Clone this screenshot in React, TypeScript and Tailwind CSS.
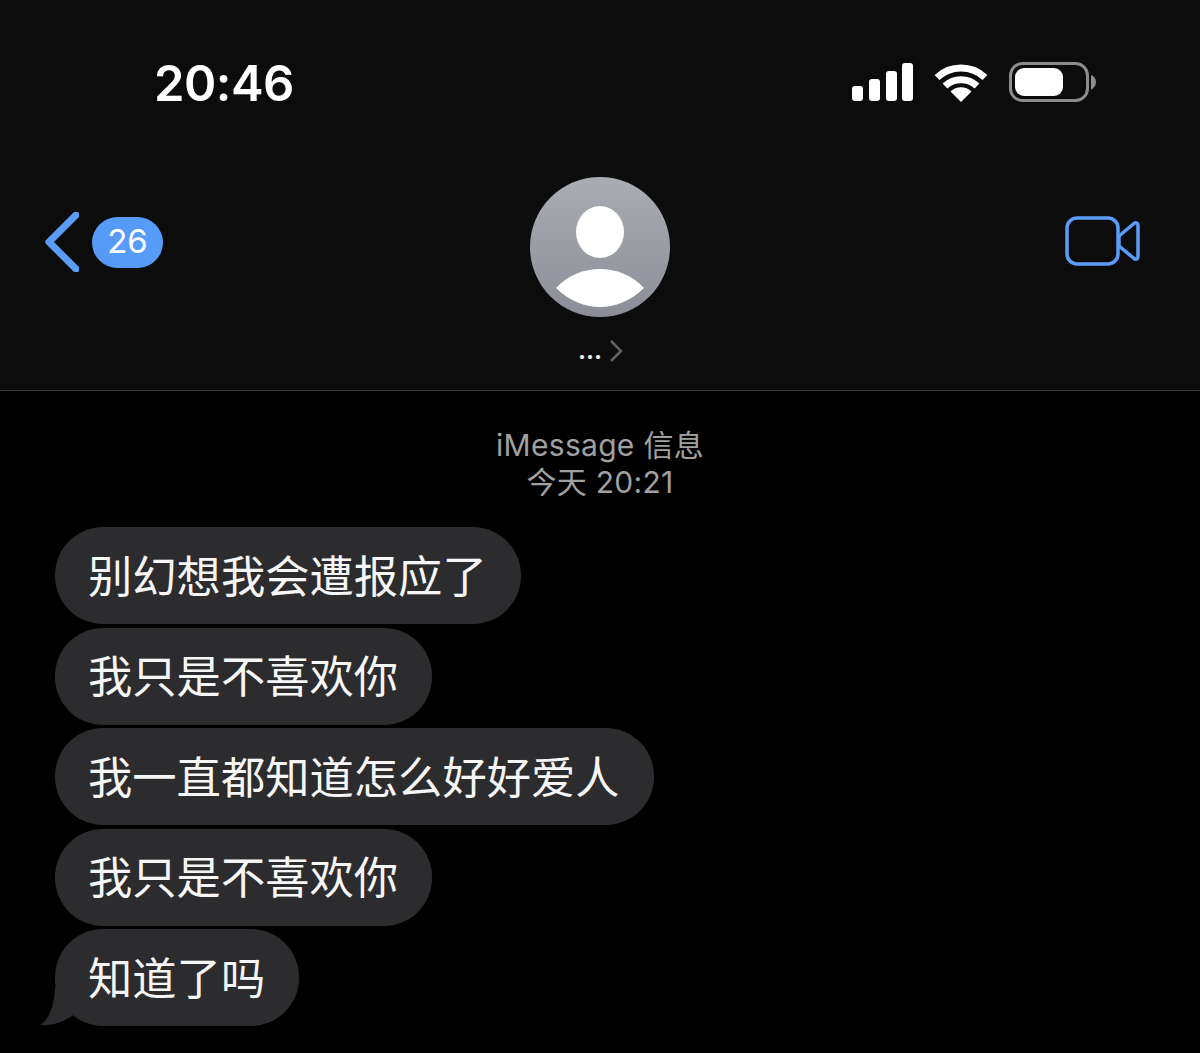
const messages = [
  "别幻想我会遭报应了",
  "我只是不喜欢你",
  "我一直都知道怎么好好爱人",
  "我只是不喜欢你",
  "知道了吗",
];

const SignalIcon = () => (
  <svg width="61" height="38" viewBox="0 0 61 38" fill="#fff">
    <rect x="0" y="23" width="11" height="15" rx="3" />
    <rect x="17" y="16" width="11" height="22" rx="3" />
    <rect x="34" y="8" width="11" height="30" rx="3" />
    <rect x="50" y="0" width="11" height="38" rx="3" />
  </svg>
);

const WifiIcon = () => (
  <svg width="54" height="40" viewBox="0 0 54 40" fill="none" stroke="#fff" strokeWidth="7">
    <path d="M3 15.500A35 35 0 0 1 51 15.500" />
    <path d="M11 24A23.500 23.500 0 0 1 43 24" />
    <path d="M16.500 29.500A15 15 0 0 1 37.500 29.500L27 40Z" fill="#fff" stroke="none" />
  </svg>
);

const BatteryIcon = () => (
  <svg width="87" height="40" viewBox="0 0 87 40" fill="none">
    <rect x="1.500" y="1.500" width="77" height="37" rx="12" stroke="#8c8c8c" strokeWidth="3" />
    <rect x="6" y="6" width="48" height="28" rx="9" fill="#fff" />
    <path d="M82 13C85 14 87 17 87 20C87 23 85 26 82 28Z" fill="#8c8c8c" />
  </svg>
);

const VideoIcon = () => (
  <svg width="75" height="50" viewBox="0 0 75 50" fill="none" stroke="#5a9df8" strokeWidth="3.500" strokeLinejoin="round">
    <rect x="2" y="2" width="51" height="46" rx="10" />
    <path d="M54 20L69 7.500C71 6 73 7 73 9.500V40.500C73 43 71 44 69 42.500L54 30Z" />
  </svg>
);

const Avatar = () => (
  <svg width="140" height="140" viewBox="0 0 140 140">
    <defs>
      <linearGradient id="avatar-bg" x1="0" y1="0" x2="0" y2="1">
        <stop offset="0" stopColor="#aaacb3" />
        <stop offset="1" stopColor="#8b8e96" />
      </linearGradient>
    </defs>
    <circle cx="70" cy="70" r="70" fill="url(#avatar-bg)" />
    <ellipse cx="70" cy="55" rx="24" ry="26" fill="#fff" />
    <path d="M26 111C38 98 54 92 70 92C86 92 102 98 114 111C102 123 86 130 70 130C54 130 38 123 26 111Z" fill="#fff" />
  </svg>
);

const Bubble = ({ text, tail }: { text: string; tail: boolean }) => (
  <div className="relative w-fit">
    {tail && (
      <svg className="absolute left-[-15px] bottom-0" width="40" height="40" viewBox="0 0 40 40" fill="#2c2c2f">
        <path d="M15 0C15 14 11 33 0 39C12 40 24 36 33 29L40 20Z" />
      </svg>
    )}
    <div className="relative flex h-[97px] items-center rounded-[48px] bg-[#2c2c2f] pl-[33px] pr-[34px] pt-[3px] text-[44.3px] leading-none text-[#f6f6f6]">
      {text}
    </div>
  </div>
);

export default function App() {
  return (
    <div className="h-[1053px] w-full overflow-hidden bg-black font-['Inter','Noto_Sans_CJK_SC',sans-serif]">
      <header className="h-[391px] border-b border-[#3c3c3c] bg-[#0c0c0c]">
        <div className="flex h-[177px] items-start justify-between pl-[154px] pr-[104px] pt-[63px]">
          <div className="text-[49px] leading-[41px] font-semibold tracking-[-0.5px] text-white">20:46</div>
          <div className="-mt-[1px] flex items-center">
            <div className="mr-[21px]">
              <SignalIcon />
            </div>
            <div className="mr-[21px]">
              <WifiIcon />
            </div>
            <BatteryIcon />
          </div>
        </div>
        <div className="grid grid-cols-3 px-[45px]">
          <div className="flex items-center gap-[13px] self-start pt-[35px]">
            <svg width="34" height="60" viewBox="0 0 34 60" fill="none" stroke="#5a9df8" strokeWidth="7" strokeLinecap="round" strokeLinejoin="round">
              <path d="M31 3L4 30L31 57" />
            </svg>
            <div className="flex h-[51px] w-[71px] items-center justify-center rounded-full bg-[#579bf9] text-[33px] text-white">26</div>
          </div>
          <div className="flex flex-col items-center">
            <Avatar />
            <div className="mt-[23px] flex h-[22px] items-center gap-[7px] pl-[1px]">
              <span className="text-[24px] leading-[22px] font-bold text-[#f2f2f2]">...</span>
              <svg width="14" height="22" viewBox="0 0 14 22" fill="none" stroke="#626262" strokeWidth="2.500">
                <path d="M2 1L12 11L2 21" />
              </svg>
            </div>
          </div>
          <div className="flex justify-end self-start pr-[15px] pt-[39px]">
            <VideoIcon />
          </div>
        </div>
      </header>
      <div className="pt-[36px] text-center text-[30px] leading-[37px] tracking-[0.3px] text-[#a0a0a0]">
        <div>iMessage 信息</div>
        <div>今天 20:21</div>
      </div>
      <div className="mt-[26px] flex flex-col gap-[3.500px] pl-[55px]">
        {messages.map((text, i) => (
          <Bubble key={i} text={text} tail={i === messages.length - 1} />
        ))}
      </div>
    </div>
  );
}
